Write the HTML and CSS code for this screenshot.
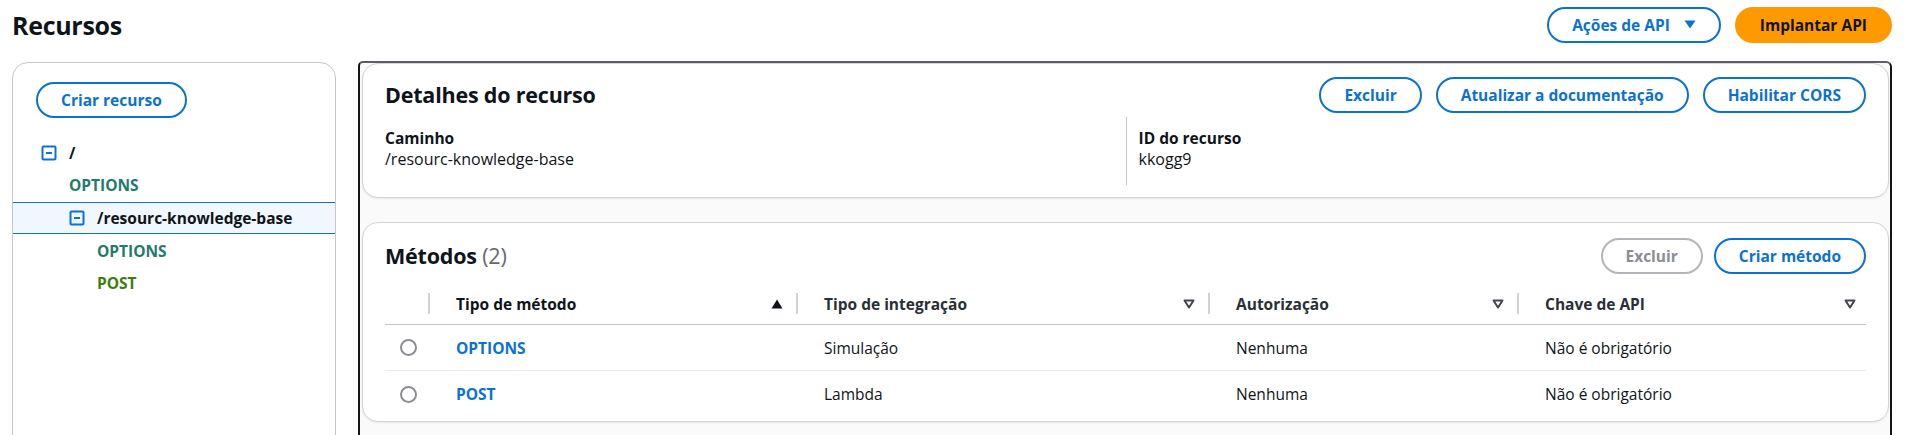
FILE: index.html
```html
<!DOCTYPE html>
<html lang="pt-BR">
<head>
<meta charset="utf-8">
<title>Recursos</title>
<link rel="stylesheet" href="styles.css">
</head>
<body>
<div class="page">
  <header class="top">
    <h1 class="page-title">Recursos</h1>
    <div class="actions">
      <button class="btn">Ações de API
        <svg class="caret" width="12" height="9" viewBox="0 0 12 9"><polygon points="0.5,0.5 11.5,0.5 6,8.5" fill="#0972d3"/></svg>
      </button>
      <button class="btn primary">Implantar API</button>
    </div>
  </header>

  <div class="layout">
    <aside class="tree-panel">
      <button class="btn create">Criar recurso</button>
      <ul class="tree">
        <li class="tree-row node lvl0">
          <svg class="toggle" width="16" height="16" viewBox="0 0 16 16"><rect x="1.5" y="1.5" width="13" height="13" rx="1" fill="none" stroke="#0972d3" stroke-width="2"/><line x1="5" y1="8" x2="11" y2="8" stroke="#0972d3" stroke-width="2"/></svg>
          <span class="path">/</span>
        </li>
        <li class="tree-row method m-lvl0 options">OPTIONS</li>
        <li class="tree-row node lvl1 selected">
          <svg class="toggle" width="16" height="16" viewBox="0 0 16 16"><rect x="1.5" y="1.5" width="13" height="13" rx="1" fill="none" stroke="#0972d3" stroke-width="2"/><line x1="5" y1="8" x2="11" y2="8" stroke="#0972d3" stroke-width="2"/></svg>
          <span class="path">/resourc-knowledge-base</span>
        </li>
        <li class="tree-row method m-lvl1 options">OPTIONS</li>
        <li class="tree-row method m-lvl1 post">POST</li>
      </ul>
    </aside>

    <main class="frame">
      <section class="card details">
        <div class="card-header">
          <h2 class="card-title">Detalhes do recurso</h2>
          <div class="btn-group">
            <button class="btn">Excluir</button>
            <button class="btn">Atualizar a documentação</button>
            <button class="btn">Habilitar CORS</button>
          </div>
        </div>
        <div class="columns">
          <div class="col">
            <div class="kv-label">Caminho</div>
            <div class="kv-value">/resourc-knowledge-base</div>
          </div>
          <div class="col col-divided">
            <div class="kv-label">ID do recurso</div>
            <div class="kv-value">kkogg9</div>
          </div>
        </div>
      </section>

      <section class="card methods">
        <div class="card-header methods-header">
          <h2 class="card-title">Métodos <span class="count">(2)</span></h2>
          <div class="btn-group tight">
            <button class="btn disabled">Excluir</button>
            <button class="btn">Criar método</button>
          </div>
        </div>
        <div class="table">
          <div class="trow thead">
            <div class="cell sel divided"></div>
            <div class="cell divided"><span class="th-label strong">Tipo de método</span>
              <svg class="sort" width="12" height="10" viewBox="0 0 12 10"><polygon points="6,0.5 11.5,9.5 0.5,9.5" fill="#0f141a"/></svg>
            </div>
            <div class="cell divided"><span class="th-label">Tipo de integração</span>
              <svg class="sort" width="12" height="10" viewBox="0 0 12 10"><polygon points="1.5,1.5 10.5,1.5 6,8.5" fill="none" stroke="#424650" stroke-width="2" stroke-linejoin="round"/></svg>
            </div>
            <div class="cell divided"><span class="th-label">Autorização</span>
              <svg class="sort" width="12" height="10" viewBox="0 0 12 10"><polygon points="1.5,1.5 10.5,1.5 6,8.5" fill="none" stroke="#424650" stroke-width="2" stroke-linejoin="round"/></svg>
            </div>
            <div class="cell last"><span class="th-label">Chave de API</span>
              <svg class="sort" width="12" height="10" viewBox="0 0 12 10"><polygon points="1.5,1.5 10.5,1.5 6,8.5" fill="none" stroke="#424650" stroke-width="2" stroke-linejoin="round"/></svg>
            </div>
          </div>
          <div class="trow tbody">
            <div class="cell sel"><span class="radio"></span></div>
            <div class="cell"><a class="link">OPTIONS</a></div>
            <div class="cell">Simulação</div>
            <div class="cell">Nenhuma</div>
            <div class="cell last">Não é obrigatório</div>
          </div>
          <div class="trow tbody">
            <div class="cell sel"><span class="radio"></span></div>
            <div class="cell"><a class="link">POST</a></div>
            <div class="cell">Lambda</div>
            <div class="cell">Nenhuma</div>
            <div class="cell last">Não é obrigatório</div>
          </div>
        </div>
      </section>
    </main>
  </div>
</div>
</body>
</html>
```

FILE: styles.css
```css
* { box-sizing: border-box; }

body {
  margin: 0;
  background: #ffffff;
  color: #0f141a;
  font-family: "Open Sans", "Noto Sans", "Liberation Sans", sans-serif;
  font-size: 15.5px;
  overflow: hidden;
}

.page {
  padding: 6px 28px 0 12px;
}

/* ---------- top bar ---------- */
.top {
  display: flex;
  justify-content: space-between;
  align-items: center;
  height: 37px;
}

.page-title {
  margin: 0;
  font-size: 25px;
  font-weight: 700;
  line-height: 36px;
  letter-spacing: -0.3px;
}

.actions {
  display: flex;
  gap: 14px;
}

/* ---------- buttons ---------- */
.btn {
  display: inline-flex;
  align-items: center;
  height: 36px;
  padding: 0 23px;
  border: 2px solid #0972d3;
  border-radius: 20px;
  background: #ffffff;
  color: #0972d3;
  font-family: inherit;
  font-size: 15.5px;
  font-weight: 700;
  line-height: 32px;
  white-space: nowrap;
  cursor: pointer;
}

.btn.primary {
  background: #ff9900;
  border-color: #ff9900;
  color: #0f141a;
}

.btn.disabled {
  border-color: #b4b4bb;
  color: #8c8c94;
  cursor: default;
}

.caret {
  margin-left: 14px;
}

/* ---------- layout ---------- */
.layout {
  display: flex;
  gap: 22px;
  margin-top: 18px;
}

/* ---------- tree panel ---------- */
.tree-panel {
  flex: 0 0 324px;
  margin-top: 1px;
  min-height: 420px;
  border: 1px solid #c6c6cd;
  border-radius: 16px;
  padding-top: 19px;
}

.btn.create {
  margin-left: 23px;
}

.tree {
  list-style: none;
  margin: 19px 0 0 0;
  padding: 0;
}

.tree-row {
  display: flex;
  align-items: center;
  height: 32px;
  font-weight: 700;
  font-size: 15.5px;
  white-space: nowrap;
}

.toggle {
  flex: 0 0 auto;
  margin-right: 12px;
}

.node.lvl0 { padding-left: 28px; }
.node.lvl1 { padding-left: 56px; }
.method.m-lvl0 { padding-left: 56px; }
.method.m-lvl1 { padding-left: 84px; }

.tree-row.selected {
  margin: 1px 0;
  background: #f0f7fe;
  border-top: 1px solid #0972d3;
  border-bottom: 1px solid #0972d3;
}

.options { color: #1f7b6c; }
.post { color: #3c7d0e; }

/* ---------- frame ---------- */
.frame {
  flex: 1 1 auto;
  min-height: 400px;
  border: 2px solid #121417;
  border-top-color: #5c5f63;
  border-bottom: none;
  border-radius: 5px 6px 0 0;
  padding: 0 1px 0 2px;
  background: #fafafa;
}

/* ---------- cards ---------- */
.card {
  background: #ffffff;
  border: 1px solid #d3d3d8;
  border-radius: 16px;
  box-shadow: 0 1px 2px rgba(0, 7, 22, 0.08);
  padding: 0 22px;
}

.card-header {
  display: flex;
  justify-content: space-between;
  align-items: center;
  height: 36px;
}

.card-title {
  margin: 0;
  font-size: 21.5px;
  font-weight: 700;
  line-height: 28px;
  letter-spacing: -0.2px;
}

.count {
  font-weight: 400;
  color: #656871;
}

.btn-group {
  display: flex;
  gap: 14px;
}

.btn-group.tight { gap: 11px; }

.details {
  padding-top: 13px;
  padding-bottom: 12px;
}

.columns {
  display: grid;
  grid-template-columns: 1fr 1fr;
  margin-top: 4px;
}

.col {
  height: 68px;
  padding-top: 11px;
}

.col-divided {
  border-left: 1px solid #c6c6cd;
  padding-left: 12px;
}

.kv-label {
  font-weight: 700;
  font-size: 15.5px;
  line-height: 21px;
}

.kv-value {
  font-size: 16px;
  line-height: 21px;
}

/* ---------- methods ---------- */
.methods {
  margin-top: 24px;
  padding-top: 15px;
  padding-bottom: 4px;
}

.methods-header {
  margin-bottom: 9px;
}

.trow {
  display: grid;
  grid-template-columns: 45px 368px 412px 309px 1fr;
  align-items: center;
}

.thead {
  height: 42px;
  border-bottom: 1px solid #c6c6cd;
}

.tbody {
  height: 46px;
  border-bottom: 1px solid #e9ebed;
  font-size: 15.5px;
}

.tbody:last-child { border-bottom: none; }

.cell {
  position: relative;
  display: flex;
  align-items: center;
  height: 100%;
  padding-left: 26px;
  padding-right: 15px;
  white-space: nowrap;
}

.cell.last { padding-right: 10px; }

.cell.sel {
  padding-left: 15px;
  padding-right: 0;
}

.divided::after {
  content: "";
  position: absolute;
  right: 0;
  top: 10px;
  width: 2px;
  height: 21px;
  background: #d1d1d6;
}

.th-label {
  flex: 1 1 auto;
  font-weight: 700;
  font-size: 15.5px;
  color: #2a2f36;
}

.th-label.strong { color: #0f141a; }

.sort { flex: 0 0 auto; }

.radio {
  display: inline-block;
  width: 17px;
  height: 17px;
  border: 2px solid #8c8c94;
  border-radius: 50%;
  background: #fff;
}

.link {
  color: #0972d3;
  font-weight: 700;
  text-decoration: none;
}
```
